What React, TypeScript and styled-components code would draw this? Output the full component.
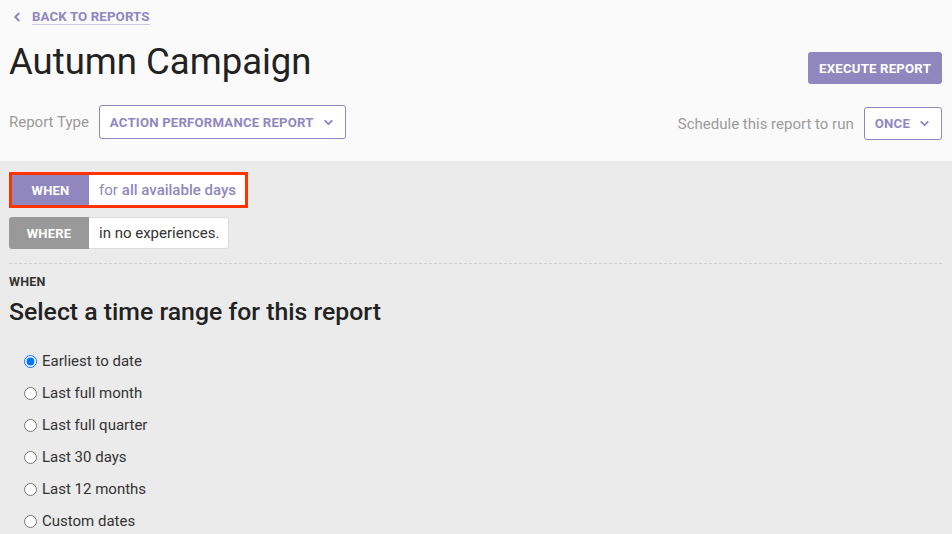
import React from 'react';
import styled, { createGlobalStyle } from 'styled-components';
import { ChevronDown, ChevronLeft } from 'lucide-react';

const GlobalStyle = createGlobalStyle`
  html, body {
    margin: 0;
    padding: 0;
    background: #ebebeb;
    font-family: Roboto, "Liberation Sans", Arial, sans-serif;
    color: #222;
  }
  * {
    box-sizing: border-box;
  }
`;

const purple = '#9087bf';

const Page = styled.div`
  width: 952px;
  min-height: 534px;
`;

const Header = styled.header`
  background: #fafafa;
  height: 161px;
  padding: 8px 10px 0 9px;
  display: flex;
  justify-content: space-between;
  align-items: flex-start;
`;

const LeftCol = styled.div`
  display: flex;
  flex-direction: column;
  align-items: flex-start;
`;

const RightCol = styled.div`
  display: flex;
  flex-direction: column;
  align-items: flex-end;
`;

const BackLink = styled.a`
  display: flex;
  align-items: center;
  height: 17px;
  margin-left: 1px;
  color: ${purple};
  font-size: 13.3px;
  font-weight: 700;
  letter-spacing: 0.1px;
  text-decoration: none;
  text-transform: uppercase;
  cursor: pointer;

  span {
    margin-left: 8px;
    border-bottom: 1px solid #cbc6e4;
    line-height: 15px;
  }
`;

const Title = styled.h1`
  margin: 15px 0 0;
  font-size: 36.5px;
  line-height: 44px;
  font-weight: 400;
  color: #222;
`;

const FieldRow = styled.div`
  display: flex;
  align-items: center;
  gap: 10px;
  margin-top: ${(p: { $top: number }) => p.$top}px;
`;

const FieldLabel = styled.span`
  font-size: 15px;
  color: #9a9a9a;
`;

const Dropdown = styled.button`
  display: flex;
  align-items: center;
  gap: 8px;
  height: ${(p: { $h: number }) => p.$h}px;
  padding: 0 10px;
  background: #fff;
  border: 1px solid ${purple};
  border-radius: 3px;
  color: ${purple};
  font-family: inherit;
  font-size: 13.2px;
  font-weight: 700;
  letter-spacing: 0.2px;
  text-transform: uppercase;
  cursor: pointer;
`;

const ExecuteButton = styled.button`
  margin-top: 44px;
  height: 32px;
  padding: 0 11px;
  background: ${purple};
  border: none;
  border-radius: 3px;
  color: #fff;
  font-family: inherit;
  font-size: 13.2px;
  font-weight: 700;
  letter-spacing: 0.2px;
  text-transform: uppercase;
  cursor: pointer;
`;

const Body = styled.main`
  padding: 11px 10px 0 9px;
`;

const Pill = styled.div<{ $highlight?: boolean; $tone: string }>`
  display: inline-flex;
  align-items: stretch;
  height: ${(p) => (p.$highlight ? 36 : 32)}px;
  border: ${(p) => (p.$highlight ? '3px solid #ff3300' : 'none')};
  border-radius: ${(p) => (p.$highlight ? 0 : 3)}px;
  overflow: hidden;

  & > b {
    display: flex;
    align-items: center;
    justify-content: center;
    width: ${(p) => (p.$highlight ? 77 : 80)}px;
    background: ${(p) => p.$tone};
    color: #fff;
    font-size: 13px;
    font-weight: 700;
    letter-spacing: 0.2px;
  }
`;

const PillValue = styled.span<{ $accent?: boolean }>`
  display: flex;
  align-items: center;
  padding: 0 9px 0 10px;
  background: #fff;
  border: ${(p) => (p.$accent ? 'none' : '1px solid #dcdcdc')};
  border-left: none;
  border-radius: 0 3px 3px 0;
  font-size: 15px;
  color: ${(p) => (p.$accent ? purple : '#333')};

  strong {
    font-weight: 500;
    margin-left: 4px;
  }
`;

const Pills = styled.div`
  display: flex;
  flex-direction: column;
  align-items: flex-start;
  gap: 9px;
`;

const Divider = styled.hr`
  margin: 14px 0 0;
  border: none;
  border-top: 1px dashed #d0d0d0;
`;

const SectionTag = styled.div`
  margin-top: 10px;
  font-size: 12.5px;
  font-weight: 700;
  color: #333;
  letter-spacing: 0.2px;
`;

const SectionTitle = styled.h2`
  margin: 8px 0 0;
  font-size: 24.8px;
  line-height: 30px;
  font-weight: 500;
  color: #222;
`;

const RadioList = styled.div`
  margin-top: 18px;
  display: flex;
  flex-direction: column;
`;

const RadioRow = styled.label`
  display: flex;
  align-items: center;
  height: 32px;
  padding-left: 11px;
  font-size: 15px;
  color: #333;
  cursor: pointer;

  input {
    width: 13px;
    height: 13px;
    margin: 0 5px 0 4px;
  }
`;

const ranges = [
  'Earliest to date',
  'Last full month',
  'Last full quarter',
  'Last 30 days',
  'Last 12 months',
  'Custom dates',
];

export default function App() {
  return (
    <Page>
      <GlobalStyle />
      <Header>
        <LeftCol>
          <BackLink>
            <ChevronLeft size={14} strokeWidth={3.5} />
            <span>Back to reports</span>
          </BackLink>
          <Title>Autumn Campaign</Title>
          <FieldRow $top={21}>
            <FieldLabel>Report Type</FieldLabel>
            <Dropdown $h={34}>
              Action performance report
              <ChevronDown size={13} strokeWidth={3.5} />
            </Dropdown>
          </FieldRow>
        </LeftCol>
        <RightCol>
          <ExecuteButton>Execute report</ExecuteButton>
          <FieldRow $top={23}>
            <FieldLabel>Schedule this report to run</FieldLabel>
            <Dropdown $h={33}>
              Once
              <ChevronDown size={13} strokeWidth={3.5} />
            </Dropdown>
          </FieldRow>
        </RightCol>
      </Header>
      <Body>
        <Pills>
          <Pill $highlight $tone={purple}>
            <b>WHEN</b>
            <PillValue $accent>
              for<strong>all available days</strong>
            </PillValue>
          </Pill>
          <Pill $tone="#999">
            <b>WHERE</b>
            <PillValue>in no experiences.</PillValue>
          </Pill>
        </Pills>
        <Divider />
        <SectionTag>WHEN</SectionTag>
        <SectionTitle>Select a time range for this report</SectionTitle>
        <RadioList>
          {ranges.map((r, i) => (
            <RadioRow key={r}>
              <input type="radio" name="range" defaultChecked={i === 0} />
              {r}
            </RadioRow>
          ))}
        </RadioList>
      </Body>
    </Page>
  );
}
